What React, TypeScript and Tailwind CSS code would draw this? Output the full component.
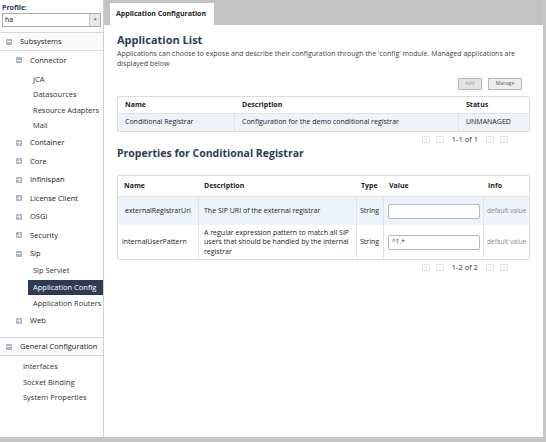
import React from "react";

const font = { fontFamily: '"Open Sans", "Liberation Sans", sans-serif' };

function Toggle({ open }: { open: boolean }) {
  return (
    <span className="relative inline-flex items-center justify-center w-[6px] h-[6px] bg-[#aab4c2] rounded-[1px] mr-[8px] shrink-0">
      <span className="absolute w-[4px] h-[1px] bg-white" />
      {!open && <span className="absolute w-[1px] h-[4px] bg-white" />}
    </span>
  );
}

function Group({ label, open = false }: { label: string; open?: boolean }) {
  return (
    <div className="flex items-center h-[18.5px] pl-[16px] text-[7.5px] text-[#222]">
      <Toggle open={open} />
      {label}
    </div>
  );
}

function Leaf({ label, selected = false, pl = "pl-[33px]" }: { label: string; selected?: boolean; pl?: string }) {
  return (
    <div
      className={`flex items-center h-[15.5px] ${pl} text-[7.5px] ${selected ? "bg-[#2f3b52] text-white ml-[28px] !pl-[5px]" : "text-[#333]"}`}
    >
      {label}
    </div>
  );
}

function PBtn({ c }: { c: string }) {
  return (
    <span className="w-[8px] h-[7px] border border-[#e4e4e4] text-[5px] leading-[5px] text-[#c8c8c8] flex items-center justify-center">
      {c}
    </span>
  );
}

function Pager({ text }: { text: string }) {
  return (
    <div className="flex items-center justify-end gap-[6px] pr-[22px] text-[7.5px] text-[#333] h-[13px]">
      <PBtn c="«" />
      <PBtn c="‹" />
      <span className="px-[2px]">{text}</span>
      <PBtn c="›" />
      <PBtn c="»" />
    </div>
  );
}

export default function App() {
  return (
    <div className="w-[546px] h-[442px] overflow-hidden bg-white flex flex-col" style={font}>
      <div className="flex flex-1 min-h-0">
        {/* Sidebar */}
        <div className="w-[104px] shrink-0 border-r border-[#cfcfcf] flex flex-col">
          <div className="px-[2px] pt-[4px] pb-[5px] border-b border-[#d8d8d8]">
            <div className="text-[7px] font-bold text-[#2a3c57] leading-[8px]">Profile:</div>
            <div className="mt-[1px] h-[14px] border border-[#aaa] bg-white flex items-center">
              <span className="text-[7px] pl-[2px] flex-1 text-[#111]">ha</span>
              <span className="w-[11px] h-[12px] bg-[#e8e8e8] border-l border-[#ccc] flex items-center justify-center text-[5px] text-[#666]">▾</span>
            </div>
          </div>
          <div className="flex items-center h-[18px] pl-[6px] text-[7.5px] text-[#222] border-b border-[#e0e0e0] bg-[#fafafa]">
            <Toggle open />
            Subsystems
          </div>
          <Group label="Connector" open />
          <div className="pt-[2px]">
            <Leaf label="JCA" />
            <Leaf label="Datasources" />
            <Leaf label="Resource Adapters" />
            <Leaf label="Mail" />
          </div>
          <Group label="Container" />
          <Group label="Core" />
          <Group label="Infinispan" />
          <Group label="License Client" />
          <Group label="OSGi" />
          <Group label="Security" />
          <Group label="Sip" open />
          <Leaf label="Sip Servlet" />
          <div className="pt-[1px]">
            <Leaf label="Application Config" selected />
          </div>
          <div className="pt-[1px]">
            <Leaf label="Application Routers" />
          </div>
          <Group label="Web" />
          <div className="mt-[7px] flex items-center h-[19px] pl-[6px] text-[7.5px] text-[#222] border-y border-[#d8d8d8] bg-[#fafafa]">
            <Toggle open />
            General Configuration
          </div>
          <div className="pt-[3px]">
            <Leaf label="Interfaces" pl="pl-[23px]" />
            <Leaf label="Socket Binding" pl="pl-[23px]" />
            <Leaf label="System Properties" pl="pl-[23px]" />
          </div>
        </div>

        {/* Main */}
        <div className="flex-1 flex flex-col border-r-[3px] border-[#c8c8c8]">
          <div className="h-[25px] bg-[#c3c3c3] flex items-end pl-[6px] shrink-0">
            <div className="h-[22px] w-[104px] bg-white flex items-center pl-[6px] text-[7px] font-bold text-[#222]">
              Application Configuration
            </div>
          </div>
          <div className="px-[13px] pt-[8px]">
            <div className="text-[11px] font-bold text-[#2a3c57] leading-[14px]">Application List</div>
            <div className="mt-[2px] text-[7px] leading-[10px] text-[#444] pr-[4px]">
              Applications can choose to expose and describe their configuration through the 'config' module. Managed applications are displayed below
            </div>
            <div className="mt-[9px] flex justify-end gap-[6px] pr-[8px]">
              <div className="h-[12px] w-[24px] border border-[#bbb] bg-[#e4e4e4] text-[5px] text-[#999] flex items-center justify-center">Add</div>
              <div className="h-[12px] w-[34px] border border-[#bbb] bg-[#ececec] text-[5px] text-[#666] flex items-center justify-center">Manage</div>
            </div>
            <div className="mt-[6px] border border-[#dcdcdc] rounded-[2px] text-[7px] text-[#222]">
              <div className="flex h-[17px] items-center font-bold border-b border-[#e2e2e2]">
                <div className="w-[117px] pl-[7px]">Name</div>
                <div className="w-[224px] pl-[7px]">Description</div>
                <div className="flex-1 pl-[7px]">Status</div>
              </div>
              <div className="flex h-[17px] items-center bg-[#eef3f9]">
                <div className="w-[117px] pl-[7px] h-full flex items-center border-r border-[#dde3ea]">Conditional Registrar</div>
                <div className="w-[224px] pl-[7px] h-full flex items-center border-r border-[#dde3ea]">Configuration for the demo conditional registrar</div>
                <div className="flex-1 pl-[7px]">UNMANAGED</div>
              </div>
            </div>
            <div className="mt-[1px]">
              <Pager text="1-1 of 1" />
            </div>
            <div className="mt-[0px] text-[10.5px] font-bold text-[#2a3c57] leading-[14px]">Properties for Conditional Registrar</div>
            <div className="mt-[15px] border border-[#dcdcdc] rounded-[2px] text-[7px] text-[#222]">
              <div className="flex h-[21px] items-center font-bold border-b border-[#e2e2e2]">
                <div className="w-[81px] pl-[6px]">Name</div>
                <div className="w-[158px] pl-[5px]">Description</div>
                <div className="w-[27px] pl-[4px]">Type</div>
                <div className="w-[100px] pl-[5px]">Value</div>
                <div className="flex-1 pl-[4px]">Info</div>
              </div>
              <div className="flex h-[28px] items-center bg-[#eef3f9]">
                <div className="w-[81px] pl-[7px] h-full flex items-center border-r border-[#dde3ea]">externalRegistrarUri</div>
                <div className="w-[158px] pl-[5px] h-full flex items-center border-r border-[#dde3ea]">The SIP URI of the external registrar</div>
                <div className="w-[27px] pl-[3px] h-full flex items-center border-r border-[#dde3ea]">String</div>
                <div className="w-[100px] pl-[4px] pr-[3px] h-full flex items-center border-r border-[#dde3ea]">
                  <div className="w-full h-[15px] bg-white border border-[#b8b8b8] rounded-[2px]" />
                </div>
                <div className="flex-1 pl-[3px] text-[#888] whitespace-nowrap text-[6.5px]">default value</div>
              </div>
              <div className="flex h-[34px] items-center">
                <div className="w-[81px] pl-[4px] h-full flex items-center border-r border-[#e4e4e4]">internalUserPattern</div>
                <div className="w-[158px] pl-[5px] pr-[3px] h-full flex items-center border-r border-[#e4e4e4] leading-[9.5px]">
                  A regular expression pattern to match all SIP users that should be handled by the internal registrar
                </div>
                <div className="w-[27px] pl-[3px] h-full flex items-center border-r border-[#e4e4e4]">String</div>
                <div className="w-[100px] pl-[4px] pr-[3px] h-full flex items-center border-r border-[#e4e4e4]">
                  <div className="w-full h-[15px] bg-white border border-[#b8b8b8] rounded-[2px] flex items-center pl-[3px] text-[6.5px] text-[#444]">^1.*</div>
                </div>
                <div className="flex-1 pl-[3px] text-[#888] whitespace-nowrap text-[6.5px]">default value</div>
              </div>
            </div>
            <div className="mt-[1px]">
              <Pager text="1-2 of 2" />
            </div>
          </div>
        </div>
      </div>
      <div className="h-[5px] bg-[#c6c6c6] shrink-0" />
    </div>
  );
}
